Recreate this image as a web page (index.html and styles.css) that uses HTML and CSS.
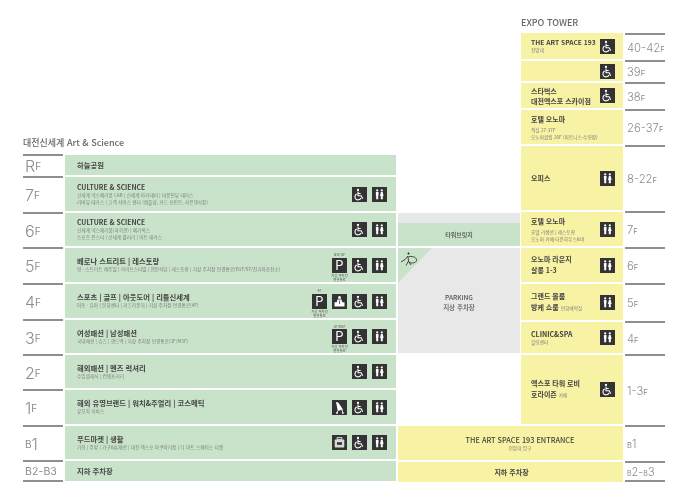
FILE: index.html
```html
<!DOCTYPE html>
<html lang="ko">
<head>
<meta charset="utf-8">
<title>Floor guide</title>
<link rel="stylesheet" href="styles.css">
</head>
<body>
<svg class="defs" width="0" height="0" aria-hidden="true">
  <symbol id="i-wc" viewBox="0 0 15 15">
    <circle cx="6" cy="2.9" r="1.15" fill="#fff"/>
    <path d="M6 4.6V8.7H9.2L10.7 11.8M6 6.5H8.7M4.7 7A3.1 3.1 0 1 0 8.9 11" fill="none" stroke="#fff" stroke-width="1.1"/>
  </symbol>
  <symbol id="i-toilet" viewBox="0 0 15 15">
    <circle cx="5.2" cy="3.4" r="1.1" fill="#fff"/>
    <circle cx="9.8" cy="3.4" r="1.1" fill="#fff"/>
    <path d="M3.9 5H6.5V8.6H6.2V12.2H4.2V8.6H3.9Z" fill="#fff"/>
    <path d="M8.9 5H10.7L11.6 9H10.8V12.2H8.8V9H8Z" fill="#fff"/>
  </symbol>
  <symbol id="i-lounge" viewBox="0 0 15 15">
    <circle cx="7.5" cy="3.6" r="1.5" fill="#fff"/>
    <path d="M5.5 5.6H9.5L10.3 8.3H12.5V12.4H2.5V8.3H4.7Z" fill="#fff"/>
    <path d="M7.5 6.5V10" stroke="#333" stroke-width=".8"/>
  </symbol>
  <symbol id="i-stroller" viewBox="0 0 15 15">
    <path d="M4 2 6.2 2.6 11 9.6 5.8 11Z" fill="#fff"/>
    <path d="M5.7 10.8 5 12.8M10 9.8 10.8 12.6" fill="none" stroke="#fff" stroke-width=".9"/>
    <circle cx="5" cy="13" r=".9" fill="#fff"/>
    <circle cx="10.8" cy="13" r=".9" fill="#fff"/>
  </symbol>
  <symbol id="i-bag" viewBox="0 0 15 15">
    <path d="M5 2.6H10V4.4H5Z" fill="none" stroke="#fff" stroke-width=".8"/>
    <rect x="2.7" y="4.4" width="9.6" height="8.2" rx=".8" fill="#d8d8d8"/>
    <rect x="5" y="7.2" width="5" height="2.6" fill="#333"/>
  </symbol>
</svg>
<main class="guide">
  <section class="tower-left">
    <h2 class="tower-title">대전신세계 Art &amp; Science</h2>
    <div class="floors-left">
      <div class="floor lab">R<small>F</small></div>
      <div class="block green"><p class="name">하늘공원</p></div>

      <div class="floor lab">7<small>F</small></div>
      <div class="block green">
        <div class="info"><p class="name latin">CULTURE &amp; SCIENCE</p><p class="sub">신세계 넥스페리움 LAB | 신세계 아카데미 | 마운틴뷰 테라스</p><p class="sub">리버뷰 테라스 | 고객 서비스 센터 (샘플샵, 카드 포인트, 사은행사장)</p></div>
        <div class="icons"><svg class="ic"><use href="#i-wc"/></svg><svg class="ic"><use href="#i-toilet"/></svg></div>
      </div>

      <div class="floor lab">6<small>F</small></div>
      <div class="block green">
        <div class="info"><p class="name latin">CULTURE &amp; SCIENCE</p><p class="sub">신세계 넥스페리움(과학관) | 메가박스</p><p class="sub">스포츠 몬스터 | 신세계 갤러리 | 아트 테라스</p></div>
        <div class="icons"><svg class="ic"><use href="#i-wc"/></svg><svg class="ic"><use href="#i-toilet"/></svg></div>
      </div>

      <div class="floor lab">5<small>F</small></div>
      <div class="block green">
        <div class="info"><p class="name">베로나 스트리트 | 레스토랑</p><p class="sub">영 · 스트리트 캐주얼 | 라이프스타일 | 전문식당 | 레스토랑 | 지상 주차장 연결통로(B1F/5F/전기차충전소)</p></div>
        <div class="icons"><div class="ic park"><span class="cap-top">B1F/5F</span>P<span class="cap-bot">지상 주차장<br>연결통로</span></div><svg class="ic"><use href="#i-wc"/></svg><svg class="ic"><use href="#i-toilet"/></svg></div>
      </div>

      <div class="floor lab">4<small>F</small></div>
      <div class="block green">
        <div class="info"><p class="name">스포츠 | 골프 | 아웃도어 | 리틀신세계</p><p class="sub">아동 · 유아 | 문화센터 | 키즈라운지 | 지상 주차장 연결통로(4F)</p></div>
        <div class="icons"><div class="ic park"><span class="cap-top">4F</span>P<span class="cap-bot">지상 주차장<br>연결통로</span></div><svg class="ic"><use href="#i-lounge"/></svg><svg class="ic"><use href="#i-wc"/></svg><svg class="ic"><use href="#i-toilet"/></svg></div>
      </div>

      <div class="floor lab">3<small>F</small></div>
      <div class="block green">
        <div class="info"><p class="name">여성패션 | 남성패션</p><p class="sub">국내패션 | 슈즈 | 핸드백 | 지상 주차장 연결통로(3F/M3F)</p></div>
        <div class="icons"><div class="ic park"><span class="cap-top">3F/M3F</span>P<span class="cap-bot">지상 주차장<br>연결통로</span></div><svg class="ic"><use href="#i-wc"/></svg><svg class="ic"><use href="#i-toilet"/></svg></div>
      </div>

      <div class="floor lab">2<small>F</small></div>
      <div class="block green">
        <div class="info"><p class="name">해외패션 | 멘즈 럭셔리</p><p class="sub">수입클래식 | 컨템포러리</p></div>
        <div class="icons"><svg class="ic"><use href="#i-wc"/></svg><svg class="ic"><use href="#i-toilet"/></svg></div>
      </div>

      <div class="floor lab">1<small>F</small></div>
      <div class="block green">
        <div class="info"><p class="name">해외 유명브랜드 | 워치&amp;주얼리 | 코스메틱</p><p class="sub">유모차 서비스</p></div>
        <div class="icons"><svg class="ic"><use href="#i-stroller"/></svg><svg class="ic"><use href="#i-wc"/></svg><svg class="ic"><use href="#i-toilet"/></svg></div>
      </div>

      <div class="floor lab"><small>B</small>1</div>
      <div class="block green">
        <div class="info"><p class="name">푸드마켓 | 생활</p><p class="sub">가전 | 주방 | 가구&amp;홈패션 | 대전 엑스포 아쿠아리움 | 디 아트 스페이스 티켓</p></div>
        <div class="icons"><svg class="ic"><use href="#i-bag"/></svg><svg class="ic"><use href="#i-wc"/></svg><svg class="ic"><use href="#i-toilet"/></svg></div>
      </div>

      <div class="floor lab last wide">B2-B3</div>
      <div class="block green"><p class="name">지하 주차장</p></div>
    </div>
  </section>

  <section class="tower-right">
    <h2 class="expo-title">EXPO TOWER</h2>

    <div class="block yellow r1">
      <div class="info"><p class="name latin">THE ART SPACE 193</p><p class="sub">전망대</p></div>
      <svg class="ic"><use href="#i-wc"/></svg>
    </div>
    <div class="floor rlab r1"><span>40-42<small>F</small></span></div>

    <div class="block yellow r2"><div class="info"></div><svg class="ic"><use href="#i-wc"/></svg></div>
    <div class="floor rlab r2"><span>39<small>F</small></span></div>

    <div class="block yellow r3">
      <div class="info"><p class="name tight">스타벅스<br>대전엑스포 스카이점</p></div>
      <svg class="ic"><use href="#i-wc"/></svg>
    </div>
    <div class="floor rlab r3"><span>38<small>F</small></span></div>

    <div class="block yellow r4">
      <div class="info stack"><p class="name">호텔 오노마</p><p class="sub gap">객실 27-37F</p><p class="sub">오노마클럽 26F (피트니스·수영장)</p></div>
    </div>
    <div class="floor rlab r4"><span>26-37<small>F</small></span></div>

    <div class="block yellow r5">
      <div class="info"><p class="name">오피스</p></div>
      <svg class="ic"><use href="#i-toilet"/></svg>
    </div>
    <div class="floor rlab r5"><span>8-22<small>F</small></span></div>

    <div class="bridge r6">
      <div class="bridge-name">타워브릿지</div>
    </div>
    <div class="block yellow r6">
      <div class="info stack"><p class="name">호텔 오노마</p><p class="sub gap">호텔 리셉션 | 레스토랑</p><p class="sub">오노마 카페·타운하우스&amp;바</p></div>
      <svg class="ic"><use href="#i-toilet"/></svg>
    </div>
    <div class="floor rlab r6"><span>7<small>F</small></span></div>

    <div class="parking">
      <svg class="walk" viewBox="0 0 34 35" aria-hidden="true">
        <path d="M0 0H34L0 35Z" fill="#c9e3ca"/>
        <circle cx="10.5" cy="5.5" r="1" fill="#222"/>
        <path d="M3 14 7 11.5 10 8 10.5 13 8 17.5M11 8.5C16 8 19 10 18.5 12.5 18 15 14 15.5 11 14.5M10.5 13 13 17" fill="none" stroke="#222" stroke-width=".8"/>
      </svg>
      <p class="park-text">PARKING</p>
      <p class="park-text">지상 주차장</p>
    </div>

    <div class="block yellow r7">
      <div class="info"><p class="name tall">오노마 라운지<br>살롱 1-3</p></div>
      <svg class="ic"><use href="#i-toilet"/></svg>
    </div>
    <div class="floor rlab r7"><span>6<small>F</small></span></div>

    <div class="block yellow r8">
      <div class="info"><p class="name tall">그랜드 볼룸<br>방케 쇼룸 <span class="inline-sub">연회예약실</span></p></div>
      <svg class="ic"><use href="#i-toilet"/></svg>
    </div>
    <div class="floor rlab r8"><span>5<small>F</small></span></div>

    <div class="block yellow r9">
      <div class="info"><p class="name">CLINIC&amp;SPA</p><p class="sub">힐링센터</p></div>
      <svg class="ic"><use href="#i-toilet"/></svg>
    </div>
    <div class="floor rlab r9"><span>4<small>F</small></span></div>

    <div class="block yellow r10">
      <div class="info"><p class="name tall">엑스포 타워 로비<br>호라이즌 <span class="inline-sub">카페</span></p></div>
      <svg class="ic"><use href="#i-wc"/></svg>
    </div>
    <div class="floor rlab r10"><span>1-3<small>F</small></span></div>

    <div class="block yellow wide-b1">
      <p class="name entrance">THE ART SPACE 193 ENTRANCE</p><p class="sub">전망대 입구</p>
    </div>
    <div class="floor rlab r11"><span><small>B</small>1</span></div>

    <div class="block yellow wide-b2"><p class="name">지하 주차장</p></div>
    <div class="floor rlab r12 last"><span><small>B</small>2-<small>B</small>3</span></div>
  </section>
</main>
</body>
</html>
```
FILE: styles.css
```css
* { box-sizing: border-box; margin: 0; padding: 0; }
html, body { width: 680px; height: 490px; overflow: hidden; background: #fff; }
body { font-family: "Noto Sans CJK KR", "Noto Sans", sans-serif; color: #444; }
.defs { position: absolute; }
.guide { display: flex; padding-left: 23px; height: 490px; filter: blur(.35px); }

/* left tower */
.tower-left { width: 373px; padding-top: 130px; }
.tower-title { height: 24px; font-size: 9px; line-height: 25px; font-weight: 500; color: #666; }
.floors-left {
  display: grid;
  grid-template-columns: 40px 333px;
  grid-template-rows: 22px 36px 35px 36px 36px 35px 35px 36px 35px 22px;
}

/* floor labels */
.floor {
  display: flex;
  align-items: center;
  border-top: 2px solid #8f8f8f;
  color: #8c8c8c;
  font-family: "Inter", "Noto Sans", sans-serif;
  font-weight: 300;
  white-space: nowrap;
}
.floor small { font-size: 10px; font-weight: 400; }
.lab { font-size: 16px; padding-left: 2px; }
.lab.wide { font-size: 10.5px; font-weight: 400; letter-spacing: .1px; }
.floor.last { border-bottom: 2px solid #8f8f8f; }
.rlab { grid-column: 3; margin-left: 2px; padding-left: 2px; font-size: 11.3px; }
.rlab small { font-size: 7.5px; }
.rlab.r12 { font-size: 11px; }
.rlab.r12 small { font-size: 7px; }

/* blocks */
.block { display: flex; align-items: center; justify-content: space-between; margin: 1px 0; }
.green { background: #c9e3ca; margin-left: 2px; padding: 0 9px 0 12px; }
.yellow { background: #f8f2a4; grid-column: 2; padding: 0 8px 0 10px; }
.info { min-width: 0; }
.info.stack { padding-top: 2px; }
.name { font-size: 7px; line-height: 9px; font-weight: 700; color: #444; white-space: nowrap; }
.green .name { font-size: 7.3px; }
.green .name.latin { font-size: 6.8px; }
.yellow .name.latin { font-size: 6.7px; }
.name.tight { line-height: 10px; }
.name.tall { line-height: 11px; }
.sub { font-size: 4.7px; line-height: 7px; color: #7d7d7d; white-space: nowrap; }
.sub.gap { margin-top: 3px; }
.inline-sub { font-size: 4.7px; font-weight: 400; color: #7d7d7d; }

/* icons */
.icons { display: flex; gap: 5px; }
.ic { display: block; width: 15px; height: 15px; background: #333; flex: none; }
.park {
  position: relative;
  color: #fff;
  font-family: "Inter", sans-serif;
  font-size: 13px;
  line-height: 15px;
  text-align: center;
}
.cap-top, .cap-bot {
  position: absolute;
  left: -5px;
  width: 25px;
  font-family: "Noto Sans CJK KR", sans-serif;
  font-size: 3.4px;
  line-height: 4px;
  color: #555;
}
.cap-top { bottom: 100%; margin-bottom: .5px; }
.cap-bot { top: 100%; margin-top: 1px; }

/* right side */
.tower-right {
  margin-left: 2px;
  display: grid;
  grid-template-columns: 123px 102px 42px;
  grid-template-rows: 33px 27px 22px 27px 36px 66px 36px 36px 38px 33px 71px 36px 21px;
}
.expo-title {
  grid-column: 2 / 4;
  grid-row: 1;
  align-self: end;
  font-size: 9px;
  line-height: 12px;
  padding-bottom: 4px;
  font-weight: 500;
  color: #666;
}
.r1 { grid-row: 2; margin-top: 0; }
.r2 { grid-row: 3; }
.r3 { grid-row: 4; }
.r4 { grid-row: 5; }
.r5 { grid-row: 6; }
.r6 { grid-row: 7; }
.r7 { grid-row: 8; }
.r8 { grid-row: 9; }
.r9 { grid-row: 10; }
.r10 { grid-row: 11; }
.r11 { grid-row: 12; }
.r12 { grid-row: 13; }

.bridge {
  grid-column: 1;
  margin: 2px 1px 1px 0;
  background: #e8e8e8;
  display: flex;
  flex-direction: column;
  justify-content: flex-end;
}
.bridge-name {
  height: 23px;
  background: #c9e3ca;
  font-size: 6px;
  line-height: 23px;
  font-weight: 500;
  text-align: center;
  color: #444;
}
.parking {
  grid-column: 1;
  grid-row: 8 / 11;
  position: relative;
  margin: 1px 1px 1px 0;
  padding-top: 4px;
  background: #e8e8e8;
  display: flex;
  flex-direction: column;
  align-items: center;
  justify-content: center;
}
.walk { position: absolute; left: 0; top: 0; width: 34px; height: 35px; }
.park-text { font-size: 6.5px; line-height: 9.5px; font-weight: 500; color: #555; }

.wide-b1, .wide-b2 { grid-column: 1 / 3; justify-content: center; }
.wide-b1 { grid-row: 12; flex-direction: column; padding: 1px 0 0 19px; }
.wide-b2 { grid-row: 13; margin-bottom: 0; }
.entrance { font-size: 7.3px; font-weight: 500; }
```
